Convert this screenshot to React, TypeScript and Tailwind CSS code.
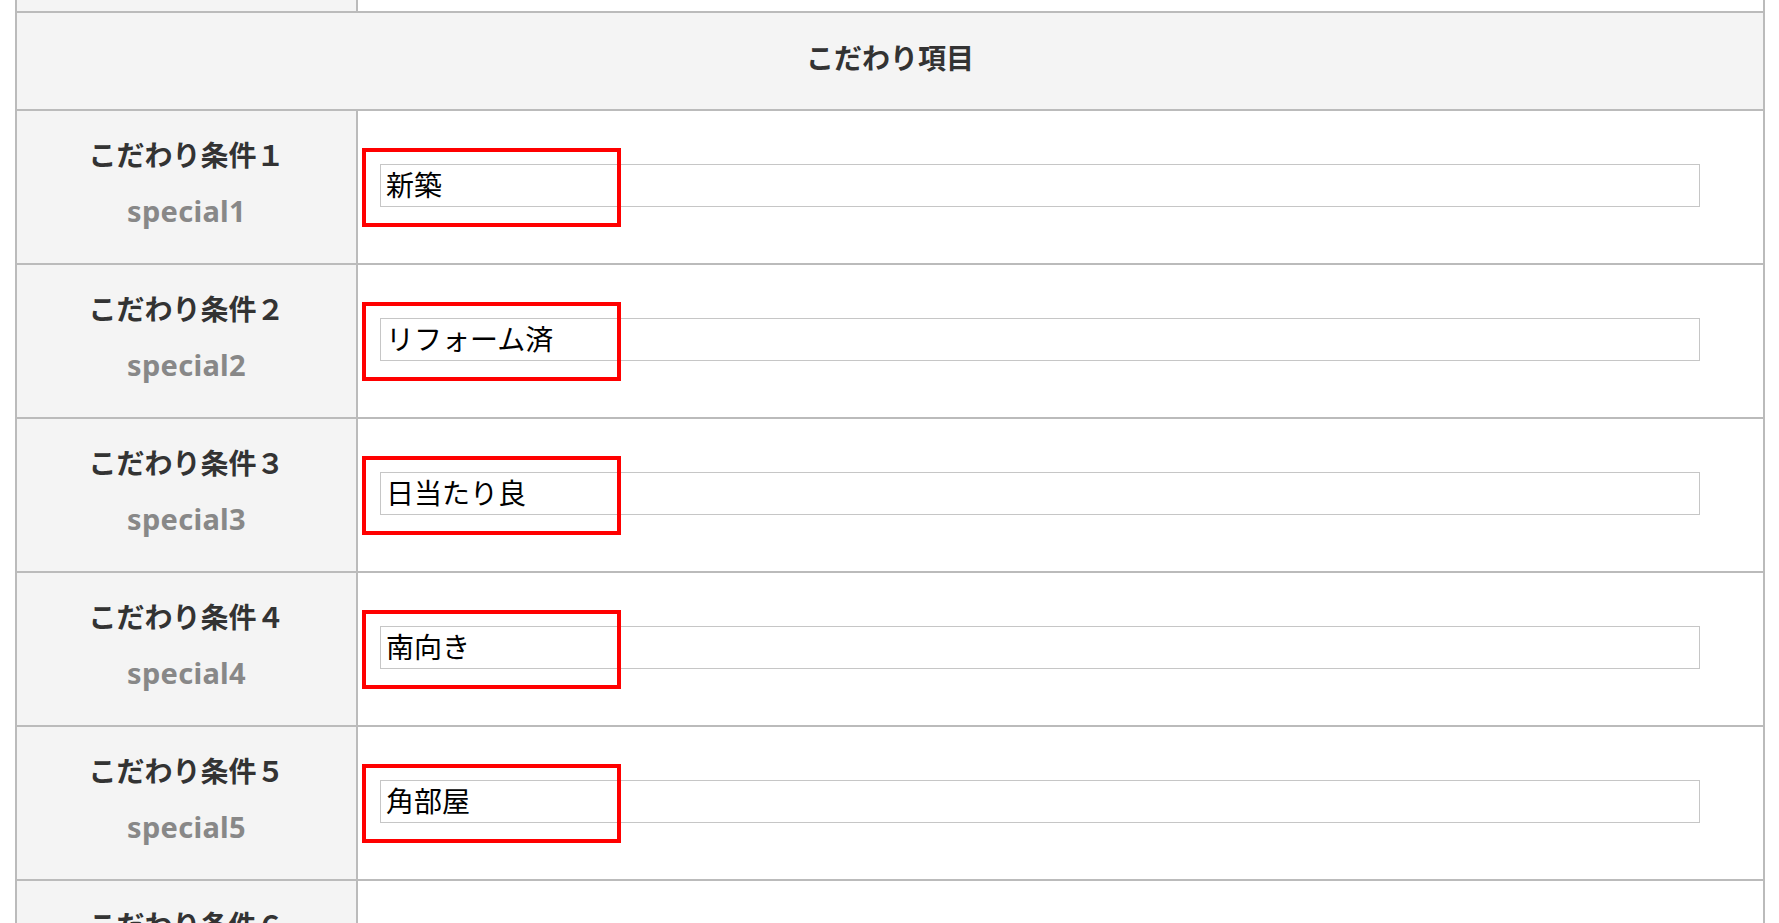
const rows = [
  { no: "１", key: "special1", value: "新築", marked: true },
  { no: "２", key: "special2", value: "リフォーム済", marked: true },
  { no: "３", key: "special3", value: "日当たり良", marked: true },
  { no: "４", key: "special4", value: "南向き", marked: true },
  { no: "５", key: "special5", value: "角部屋", marked: true },
  { no: "６", key: "special6", value: "", marked: false },
];

function Row({ no, name, value, marked }: { no: string; name: string; value: string; marked: boolean }) {
  return (
    <div className="flex border-t-2 border-[#bbbbbb] h-[154px]">
      {/* label cell */}
      <div className="w-[341px] shrink-0 border-r-2 border-[#bbbbbb] bg-[#f4f4f4] flex flex-col items-center pt-[23px]">
        <div className="font-['Noto_Sans_CJK_JP',sans-serif] font-bold text-[28px] leading-[40px] text-[#333333]">
          こだわり条件{no}
        </div>
        <div className="mt-[17px] font-['Noto_Sans','Noto_Sans_CJK_JP',sans-serif] font-bold text-[29px] leading-[40px] tracking-[0.3px] text-[#888888]">
          {name}
        </div>
      </div>

      {/* value cell */}
      <div className="relative flex-1 bg-white pl-[22px] pt-[53px]">
        <input
          type="text"
          readOnly
          defaultValue={value}
          className="block w-[1320px] h-[43px] border border-[#c6c6c6] bg-white pl-[5px] pb-[4px] font-['Noto_Sans_CJK_JP',sans-serif] text-[28px] text-black outline-none"
        />
        {marked && (
          <div className="absolute left-[4px] top-[37px] w-[259px] h-[79px] border-4 border-[#ff0000] pointer-events-none" />
        )}
      </div>
    </div>
  );
}

export default function App() {
  return (
    <div className="min-h-screen bg-white">
      <div className="ml-[15px] w-[1750px] border-x-2 border-[#bbbbbb]">
        {/* tail of the previous row */}
        <div className="flex h-[11px]">
          <div className="w-[341px] shrink-0 border-r-2 border-[#bbbbbb] bg-[#f4f4f4]" />
          <div className="flex-1 bg-white" />
        </div>

        {/* section header */}
        <div className="border-t-2 border-[#bbbbbb] h-[98px] bg-[#f4f4f4] flex items-center justify-center pb-[9px]">
          <span className="font-['Noto_Sans_CJK_JP',sans-serif] font-bold text-[28px] text-[#333333]">
            こだわり項目
          </span>
        </div>

        {rows.map((r) => (
          <Row key={r.key} no={r.no} name={r.key} value={r.value} marked={r.marked} />
        ))}
      </div>
    </div>
  );
}
